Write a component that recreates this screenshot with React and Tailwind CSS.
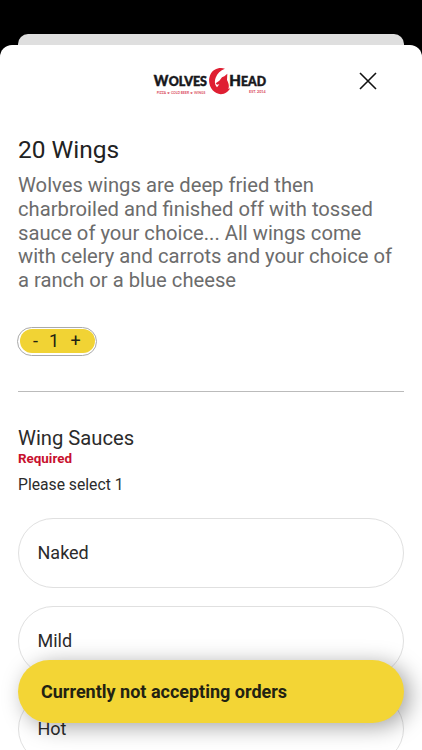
const sauces = ["Naked", "Mild", "Hot"];

const Logo = () => (
  <svg
    viewBox="0 0 342 84"
    className="w-[114px] h-7"
    role="img"
    aria-label="Wolves Head"
  >
    <g className="font-['Lato'] font-black" fill="#17171b" stroke="#17171b" strokeWidth="1.5">
      <text x="2" y="54" fontSize="45" textLength="44" lengthAdjust="spacingAndGlyphs">
        W
      </text>
      <text x="47" y="54" fontSize="38" textLength="115" lengthAdjust="spacingAndGlyphs">
        OLVES
      </text>
      <text x="229" y="54" fontSize="45" textLength="35" lengthAdjust="spacingAndGlyphs">
        H
      </text>
      <text x="264" y="54" fontSize="38" textLength="75" lengthAdjust="spacingAndGlyphs">
        EAD
      </text>
    </g>
    <g className="font-['Lato'] font-bold" fill="#d94a5a" fontSize="9">
      <text x="11" y="78" textLength="146" lengthAdjust="spacingAndGlyphs">
        PIZZA ★ COLD BEER ★ WINGS
      </text>
      <text x="288" y="74" textLength="50" lengthAdjust="spacingAndGlyphs">
        EST. 2014
      </text>
    </g>
    <path
      fill="#df1f32"
      d="M216 2C197 -4 180 5 173 18C165 33 167 53 179 67C190 79 207 83 222 72C227 68 230 65 231 61L226 63C230 51 225 43 222 36L223 17L214 25L207 28L199 38L188 46L192 50L199 49L195 54L192 58C185 50 184 40 188 29C193 16 202 7 216 2Z"
    />
  </svg>
);

const CloseIcon = () => (
  <svg viewBox="0 0 18 18" className="w-[18px] h-[18px]" fill="none" stroke="#111" strokeWidth="1.6">
    <path d="M1 1l16 16M17 1L1 17" />
  </svg>
);

const Quantity = () => (
  <div className="w-20 h-[29px] rounded-full border border-[#aaa] p-[1.5px] ml-[-1px]">
    <div className="h-full rounded-full bg-[#f1d334] flex items-center text-[#222212] text-lg leading-none">
      <button className="w-[29px] pl-[3px]">-</button>
      <span className="w-[11px] text-center">1</span>
      <button className="w-[31px] pl-px">+</button>
    </div>
  </div>
);

const App = () => {
  return (
    <div className="relative h-[750px] w-[422px] overflow-hidden bg-black font-['Roboto',sans-serif] text-[#2b2b2b]">
      <div className="mx-[18px] mt-[34px] h-[11px] rounded-t-[10px] bg-[#dfdfdf]" />
      <div className="h-[705px] rounded-t-[12px] bg-white px-[18px]">
        <header className="flex h-[72px] items-center justify-between">
          <div className="w-[18px] ml-[9px]" />
          <div className="ml-[16px] mt-[2px]">
            <Logo />
          </div>
          <button className="mr-[27px]" aria-label="Close">
            <CloseIcon />
          </button>
        </header>

        <h1 className="mt-[18px] text-[24.5px] leading-[30px] text-[#222]">20 Wings</h1>
        <p className="mt-[9.3px] w-[386px] whitespace-nowrap text-[20.22px] leading-[23.7px] text-[#6c6c6c]">
          Wolves wings are deep fried then
          <br />
          charbroiled and finished off with tossed
          <br />
          sauce of your choice... All wings come
          <br />
          with celery and carrots and your choice of
          <br />a ranch or a blue cheese
        </p>

        <div className="mt-[33.7px]">
          <Quantity />
        </div>

        <hr className="mt-[35px] border-[#bbb]" />

        <h2 className="mt-[34px] text-[20.2px] leading-6">Wing Sauces</h2>
        <p className="mt-px text-[13.4px] leading-4 font-bold text-[#c8102e]">Required</p>
        <p className="mt-[8px] text-[15.7px] leading-5">Please select 1</p>

        <ul className="mt-[23.5px] flex flex-col gap-[18px]">
          {sauces.map((sauce) => (
            <li
              key={sauce}
              className="flex h-[70px] shrink-0 items-center rounded-full border border-[#e0e0e0] px-[18.5px] pb-px text-[18px]"
            >
              {sauce}
            </li>
          ))}
        </ul>
      </div>

      <button className="absolute left-[18px] top-[660px] h-[63px] w-[386px] rounded-full bg-[#f3d535] pl-[23px] text-left text-[18px] font-bold text-[#222212] shadow-[6px_4px_22px_rgba(0,0,0,0.36)]">
        Currently not accepting orders
      </button>
    </div>
  );
};

export default App;
